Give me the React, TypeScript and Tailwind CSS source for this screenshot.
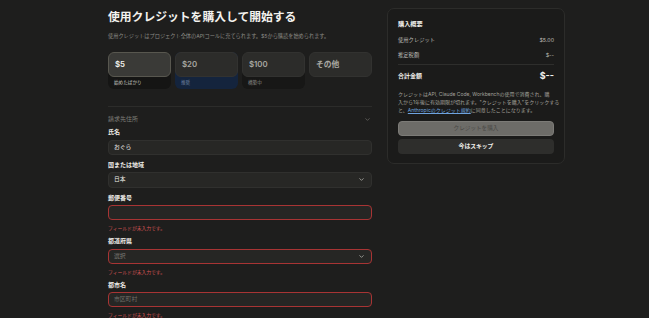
import React from 'react';
import { ChevronDown } from 'lucide-react';

const amounts = [
  { value: '$5', note: '始めたばかり', selected: true, noteBg: 'bg-[#151514]', noteText: 'text-[#c9c8c2]' },
  { value: '$20', note: '推奨', selected: false, noteBg: 'bg-[#14243d]', noteText: 'text-[#6f84a3]' },
  { value: '$100', note: '構築中', selected: false, noteBg: 'bg-[#171716]', noteText: 'text-[#8a8984]' },
  { value: 'その他', note: '', selected: false, noteBg: '', noteText: '' },
];

const Label: React.FC<{ text: string; className?: string }> = ({ text, className }) => (
  <div className={`text-[6px] leading-[8px] font-bold text-[#eeede8] ${className ?? ''}`}>{text}</div>
);

const ErrorText: React.FC = () => (
  <div className="mt-[4px] text-[4.8px] leading-[8px] text-[#d45454]">フィールドが未入力です。</div>
);

const App: React.FC = () => {
  return (
    <div className="min-h-[318px] w-[649px] bg-[#1e1e1d] font-['Inter','Noto_Sans_CJK_JP',sans-serif] text-[#eeede8]">
      <div className="flex items-start gap-[15px] pl-[108px] pt-[8px]">
        {/* 左カラム */}
        <div className="w-[264px]">
          <h1 className="mt-[1px] text-[11.8px] leading-[16px] font-bold text-[#f3f2ee]">
            使用クレジットを購入して開始する
          </h1>
          <p className="mt-[7px] text-[5.2px] leading-[8px] text-[#8c8b86]">
            使用クレジットはプロジェクト全体のAPIコールに充てられます。$5から購読を始められます。
          </p>

          <div className="mt-[12px] grid grid-cols-4 gap-[4px]">
            {amounts.map((a) => (
              <div key={a.value} className={`rounded-[6px] ${a.noteBg}`}>
                <div
                  className={`flex h-[25px] items-center rounded-[6px] border px-[6px] text-[7.8px] font-semibold ${
                    a.selected
                      ? 'border-[#58574f] bg-[#3a3a37] text-[#f4f3ef]'
                      : 'border-[#323230] bg-[#2c2c2a] text-[#a9a8a2]'
                  }`}
                >
                  {a.value}
                </div>
                {a.note && (
                  <div className={`flex h-[12px] items-center px-[6px] text-[4.6px] ${a.noteText}`}>{a.note}</div>
                )}
              </div>
            ))}
          </div>

          <div className="mt-[17px] border-t border-[#2c2c2a]" />

          <div className="mt-[8px] flex items-center justify-between">
            <span className="text-[6px] leading-[8px] text-[#7f7e79]">請求先住所</span>
            <ChevronDown size={7} strokeWidth={2} className="mr-[1px] text-[#7f7e79]" />
          </div>

          <Label text="氏名" className="mt-[5px]" />
          <div className="mt-[3.5px] flex h-[15px] items-center rounded-[4px] border border-[#30302e] bg-[#272725] px-[5px] text-[5.8px] text-[#eeede8]">
            おぐら
          </div>

          <Label text="国または地域" className="mt-[6px]" />
          <div className="mt-[3.5px] flex h-[15.5px] items-center justify-between rounded-[4px] border border-[#30302e] bg-[#272725] px-[5px] text-[5.8px] text-[#eeede8]">
            <span>日本</span>
            <ChevronDown size={7} strokeWidth={2.2} className="mr-[1px] text-[#cfcec8]" />
          </div>

          <Label text="郵便番号" className="mt-[6px]" />
          <div className="mt-[3px] h-[15px] rounded-[4px] border border-[#a83434] bg-[#262624]" />
          <ErrorText />

          <Label text="都道府県" className="mt-[5.5px]" />
          <div className="mt-[3.5px] flex h-[15px] items-center justify-between rounded-[4px] border border-[#a83434] bg-[#262624] px-[5px] text-[5.8px] text-[#7c7b76]">
            <span>選択</span>
            <ChevronDown size={7} strokeWidth={2.2} className="mr-[1px] text-[#cfcec8]" />
          </div>
          <ErrorText />

          <Label text="都市名" className="mt-[5.5px]" />
          <div className="mt-[3px] flex h-[15px] items-center rounded-[4px] border border-[#a83434] bg-[#262624] px-[5px] text-[5.8px] text-[#6f6e69]">
            市区町村
          </div>
          <ErrorText />
        </div>

        {/* 購入概要カード */}
        <div className="w-[178px] rounded-[7px] border border-[#2c2c2a] bg-[#1b1b1a] px-[10px] pb-[9px] pt-[11px]">
          <div className="text-[6.2px] leading-[8px] font-bold text-[#f1f0ec]">購入概要</div>
          <div className="mt-[8px] flex items-center justify-between text-[5.3px] leading-[8px] text-[#bdbcb6]">
            <span>使用クレジット</span>
            <span>$5.00</span>
          </div>
          <div className="mt-[7px] flex items-center justify-between text-[5.3px] leading-[8px] text-[#bdbcb6]">
            <span>推定税額</span>
            <span>$--</span>
          </div>
          <div className="mt-[5px] border-t border-[#2e2e2c]" />
          <div className="mt-[6px] flex items-center justify-between leading-[10px]">
            <span className="text-[6px] font-bold text-[#f1f0ec]">合計金額</span>
            <span className="text-[9px] font-bold text-[#f1f0ec]">$--</span>
          </div>
          <div className="mt-[9px] whitespace-nowrap text-[5px] leading-[8px] text-[#a3a29c]">
            <div>クレジットはAPI, Claude Code, Workbenchの使用で消費され、購</div>
            <div>入から1年後に有効期限が切れます。"クレジットを購入"をクリックする</div>
            <div>
              と、<span className="text-[#6ea3df] underline">Anthropicのクレジット規約</span>に同意したことになります。
            </div>
          </div>
          <div className="mt-[7px] flex h-[15px] items-center justify-center rounded-[4px] border border-[#7c7b77] bg-[#6d6c68] text-[5.6px] text-[#484744]">
            クレジットを購入
          </div>
          <div className="mt-[3px] flex h-[15px] items-center justify-center rounded-[4px] bg-[#2e2e2c] text-[5.8px] font-bold text-[#f1f0ec]">
            今はスキップ
          </div>
        </div>
      </div>
    </div>
  );
};

export default App;
